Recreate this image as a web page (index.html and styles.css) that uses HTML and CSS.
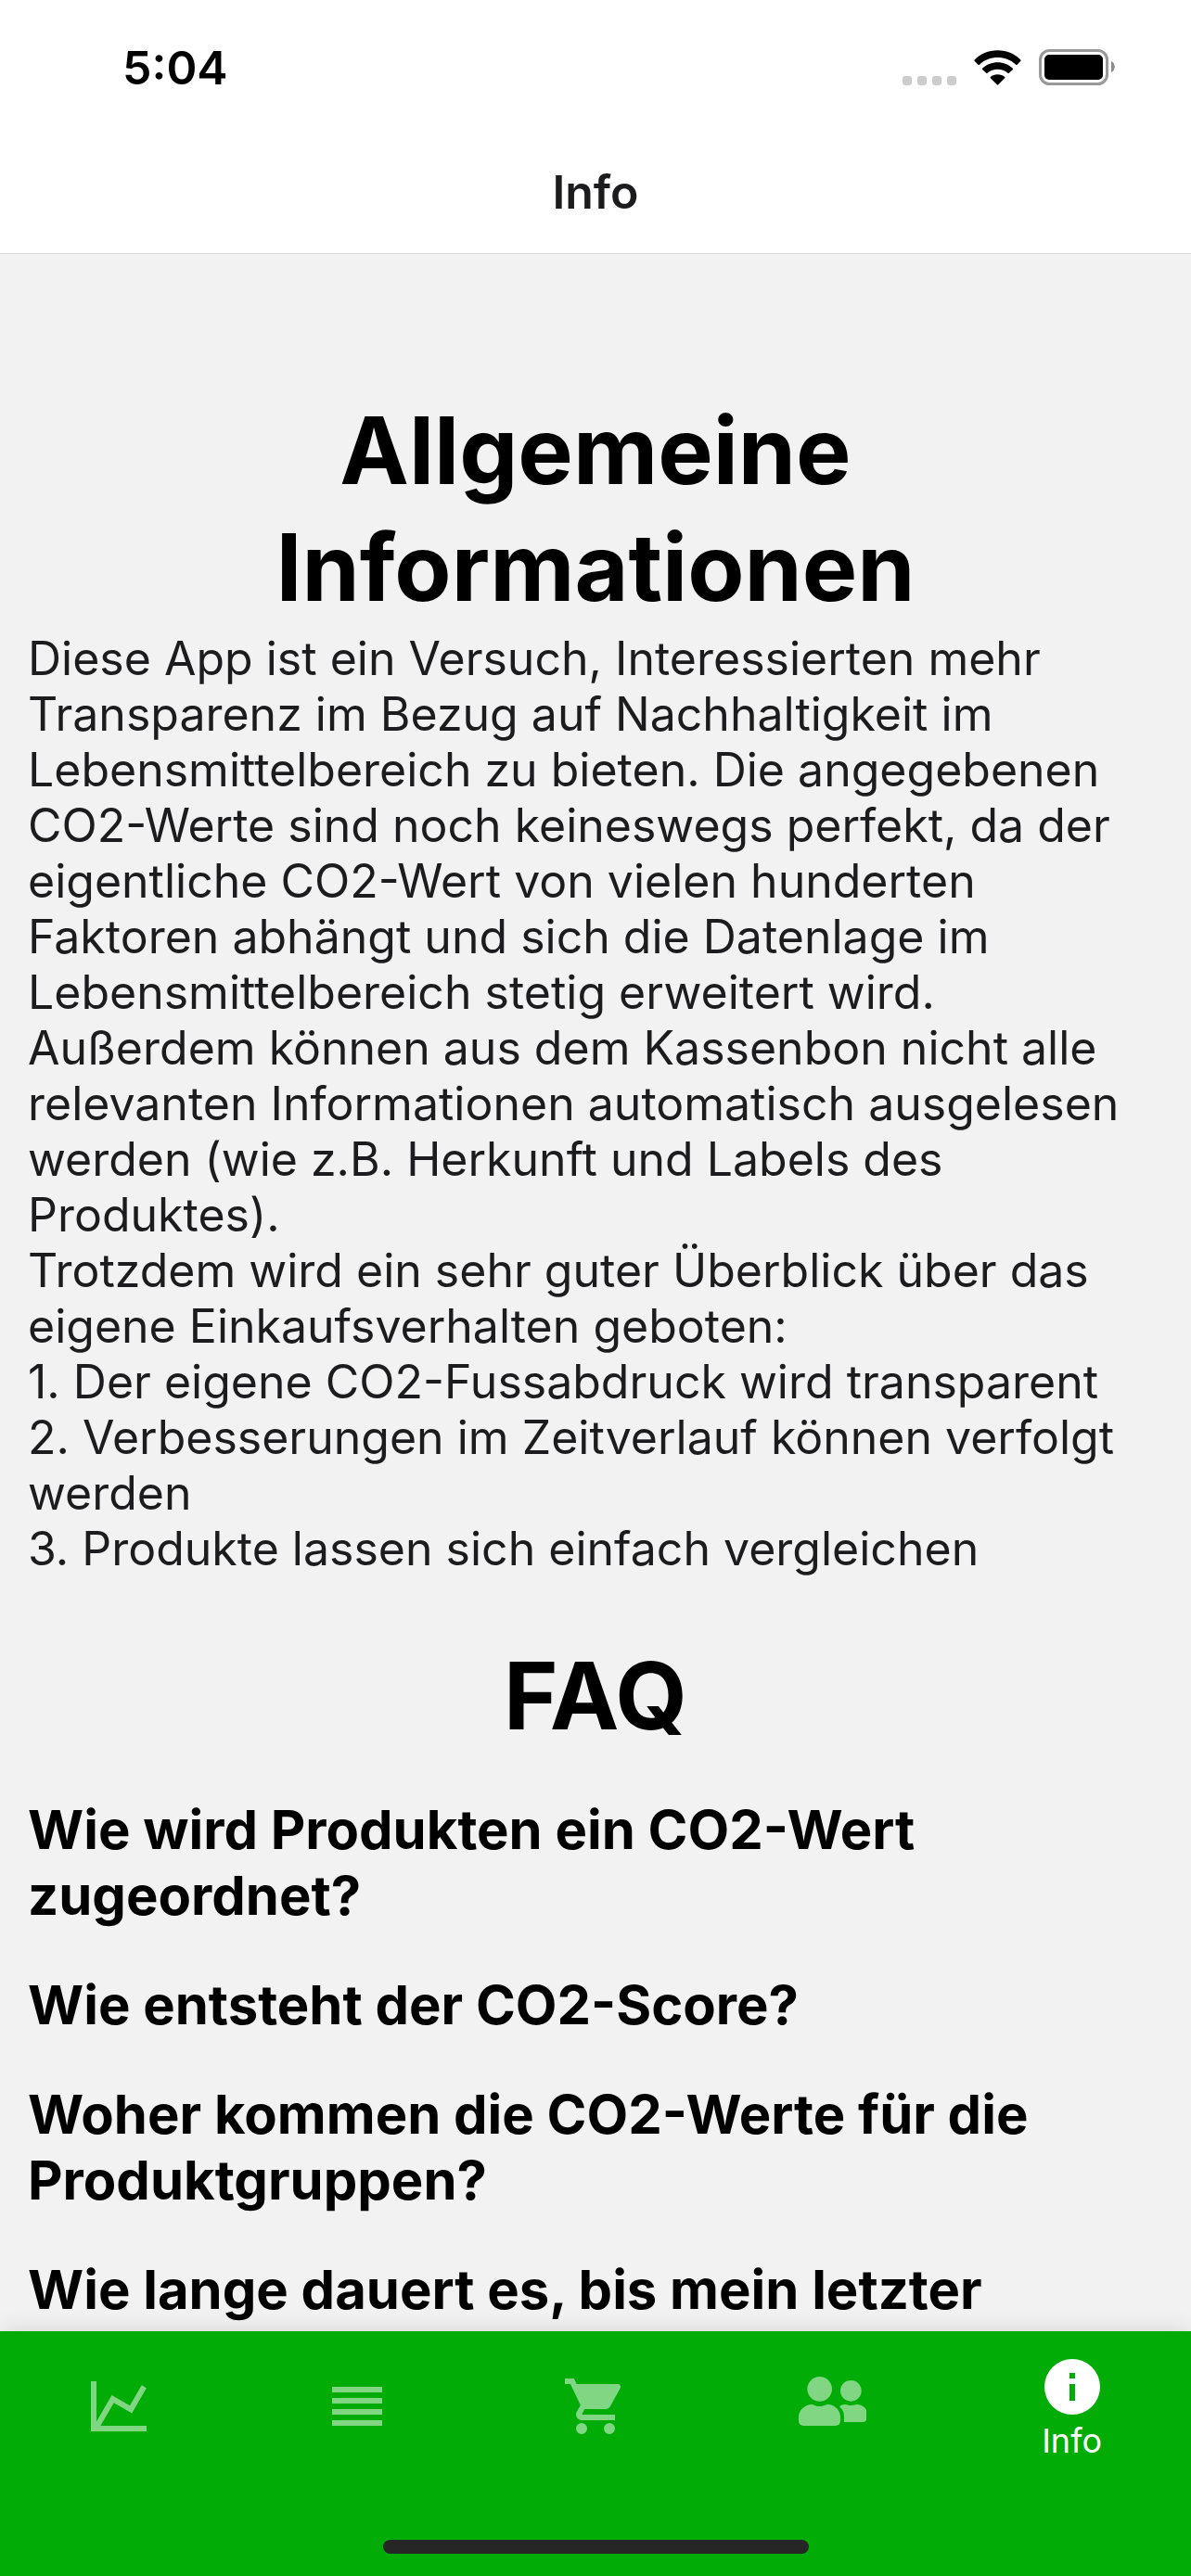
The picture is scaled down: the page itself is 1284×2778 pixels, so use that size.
FILE: index.html
```html
<!DOCTYPE html>
<html lang="de">
<head>
<meta charset="utf-8">
<meta name="viewport" content="width=device-width, initial-scale=1">
<title>Info</title>
<link rel="stylesheet" href="styles.css">
</head>
<body>
<div class="app">
  <header class="header">
    <div class="status">
      <time class="clock">5:04</time>
      <div class="status-icons">
        <svg class="signal" viewBox="0 0 58 10" aria-hidden="true"><rect width="10" height="10" rx="3"/><rect x="16" width="10" height="10" rx="3"/><rect x="32" width="10" height="10" rx="3"/><rect x="48" width="10" height="10" rx="3"/></svg>
        <svg class="wifi" viewBox="0 0 152 114" aria-hidden="true"><path d="M76 1C106 1 132 13 151 32Q152 34 150 36L139 47Q137 49 135 47C119 32 98 24 76 24S33 32 17 47Q15 49 13 47L2 36Q0 34 1 32C20 13 46 1 76 1Z"/><path d="M76 40C95 40 112 47 125 59Q127 61 125 63L113 74Q111 76 109 74C100 66 88 62 76 62S52 66 43 74Q41 76 39 74L27 63Q25 61 27 59C40 47 57 40 76 40Z"/><path d="M76 79C85 79 93 82 99 87Q101 89 99 91L78 112Q76 114 74 112L53 91Q51 89 53 87C59 82 67 79 76 79Z"/></svg>
        <svg class="battery" viewBox="0 0 82 39" aria-hidden="true"><rect class="battery-shell" x="1.5" y="1.5" width="72" height="36" rx="10"/><rect x="6" y="6" width="63" height="27" rx="5"/><path class="battery-cap" d="M78 13C83 15 83 23 78 25Z"/></svg>
      </div>
    </div>
    <div class="title">Info</div>
  </header>

  <main class="content">
    <h1 class="heading">Allgemeine Informationen</h1>
    <p class="text">Diese App ist ein Versuch, Interessierten mehr Transparenz im Bezug auf Nachhaltigkeit im Lebensmittelbereich zu bieten. Die angegebenen CO2-Werte sind noch keineswegs perfekt, da der eigentliche CO2-Wert von vielen hunderten Faktoren abhängt und sich die Datenlage im Lebensmittelbereich stetig erweitert wird. Außerdem können aus dem Kassenbon nicht alle relevanten Informationen automatisch ausgelesen werden (wie z.B. Herkunft und Labels des Produktes).<br>
    Trotzdem wird ein sehr guter Überblick über das eigene Einkaufsverhalten geboten:<br>
    1. Der eigene CO2-Fussabdruck wird transparent<br>
    2. Verbesserungen im Zeitverlauf können verfolgt werden<br>
    3. Produkte lassen sich einfach vergleichen</p>
    <h2 class="heading heading-faq">FAQ</h2>
    <div class="questions">
      <h3 class="question">Wie wird Produkten ein CO2-Wert zugeordnet?</h3>
      <h3 class="question">Wie entsteht der CO2-Score?</h3>
      <h3 class="question">Woher kommen die CO2-Werte für die Produktgruppen?</h3>
      <h3 class="question">Wie lange dauert es, bis mein letzter</h3>
    </div>
  </main>

  <nav class="tabbar">
    <div class="tabs">
      <a class="tab" href="#verlauf" aria-label="Verlauf"><svg class="icon" viewBox="0 0 24 24"><path d="M16 11.78L20.24 4.45L21.97 5.45L16.74 14.5L10.23 10.75L5.46 19H22V21H2V3H4V17.54L9.5 8Z"/></svg></a>
      <a class="tab" href="#liste" aria-label="Liste"><svg class="icon" viewBox="0 0 24 24"><path d="M3 5H21V7H3ZM3 9H21V11H3ZM3 13H21V15H3ZM3 17H21V19H3Z"/></svg></a>
      <a class="tab" href="#einkauf" aria-label="Einkauf"><svg class="icon" viewBox="0 0 24 24"><path d="M17 18A2 2 0 0 1 19 20A2 2 0 0 1 17 22A2 2 0 0 1 15 20A2 2 0 0 1 17 18M1 2H4.27L5.21 4H20A1 1 0 0 1 21 5C21 5.17 20.95 5.34 20.88 5.5L17.3 11.97C16.96 12.58 16.3 13 15.55 13H8.1L7.2 14.63L7.17 14.75A.25 .25 0 0 0 7.42 15H19V17H7A2 2 0 0 1 5 15C5 14.65 5.09 14.32 5.24 14.04L6.6 11.59L3 4H1V2M7 18A2 2 0 0 1 9 20A2 2 0 0 1 7 22A2 2 0 0 1 5 20A2 2 0 0 1 7 18Z"/></svg></a>
      <a class="tab" href="#freunde" aria-label="Freunde"><svg class="icon" viewBox="0 0 216 216"><circle cx="62" cy="52" r="40"/><circle cx="163" cy="58" r="34"/><path d="M34 102C47 102 44 108 61 108S78 102 92 102C113 105 129 122 129 143V154Q129 171 112 171H11Q-6 171 -6 154V143C-6 122 11 105 34 102Z"/><path d="M126 109C131 104 137 102 144 102C152 102 152 105 163 105S175 102 184 102C195 102 206 109 213 119V152Q211 158 204 159H141V143C141 128 136 117 126 109Z"/></svg></a>
      <a class="tab tab-active" href="#info" aria-current="page"><svg class="icon" viewBox="0 0 24 24"><path d="M13 9H11V7H13M13 17H11V11H13M12 2A10 10 0 0 0 2 12A10 10 0 0 0 12 22A10 10 0 0 0 22 12A10 10 0 0 0 12 2Z"/></svg><span>Info</span></a>
    </div>
    <div class="home-indicator"></div>
  </nav>
</div>
</body>
</html>
```
FILE: styles.css
```css
* { box-sizing: border-box; }

body {
  margin: 0;
  background: #f2f2f2;
  color: #000;
  font-family: Inter, "Liberation Sans", sans-serif;
}

.app {
  display: flex;
  flex-direction: column;
  height: 100vh;
}

.header {
  flex: none;
  background: #fff;
  border-bottom: 1px solid #d8d8d8;
}

.status {
  display: flex;
  align-items: center;
  justify-content: space-between;
  height: 145px;
  padding: 0 82px 0 132px;
}

.clock {
  font-size: 50px;
  font-weight: 600;
  line-height: 60px;
}

.status-icons {
  display: flex;
  align-items: center;
  gap: 19px;
}

.signal {
  width: 58px;
  height: 10px;
  margin-top: 28px;
  fill: #ccc;
}

.wifi { width: 51px; height: 38px; }

.battery { width: 82px; height: 39px; }
.battery-shell { fill: none; stroke: #999; stroke-width: 3; }
.battery-cap { fill: #8c8c8c; }

.title {
  height: 128px;
  color: #1c1c1e;
  font-size: 50px;
  font-weight: 600;
  line-height: 124px;
  text-align: center;
}

.content {
  flex: 1;
  min-height: 0;
  padding: 149px 30px 0;
  overflow: hidden;
}

.heading {
  max-width: 900px;
  margin: 0 auto;
  font-size: 100px;
  font-weight: 700;
  line-height: 126px;
  text-align: center;
}

.heading-faq { margin-top: 66px; }

.text {
  margin: 5px 0 0;
  color: #1c1c1e;
  font-size: 50px;
  line-height: 60px;
}

.questions {
  display: flex;
  flex-direction: column;
  gap: 47px;
  margin-top: 46px;
}

.question {
  margin: 0;
  font-size: 58px;
  font-weight: 700;
  line-height: 71px;
}

.tabbar {
  position: relative;
  flex: none;
  height: 264px;
  background: #02ac07;
  box-shadow: 0 0 24px rgba(0, 0, 0, 0.12);
}

.tabs {
  display: flex;
  height: 162px;
}

.tab {
  display: flex;
  flex: 1;
  flex-direction: column;
  align-items: center;
  justify-content: center;
  color: #81d683;
  font-size: 36px;
  line-height: 44px;
  text-decoration: none;
}

.tab-active {
  padding-top: 2px;
  color: #fff;
}

.icon {
  width: 72px;
  height: 72px;
  overflow: visible;
  fill: currentColor;
}

.home-indicator {
  position: absolute;
  bottom: 24px;
  left: 50%;
  width: 459px;
  height: 15px;
  margin-left: -229px;
  border-radius: 8px;
  background: #262626;
}
```
